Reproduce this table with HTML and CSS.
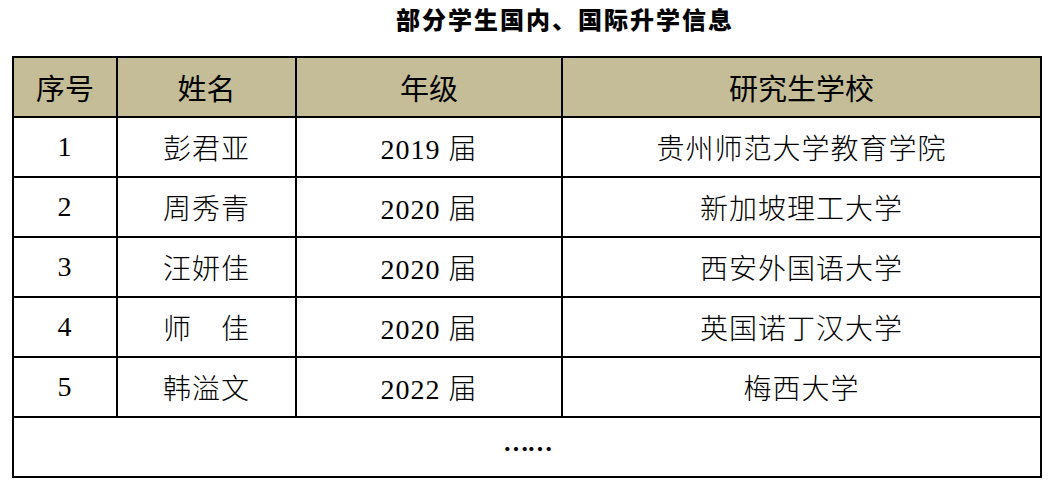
FILE: index.html
```html
<!DOCTYPE html>
<html lang="zh">
<head>
<meta charset="utf-8">
<title>部分学生国内、国际升学信息</title>
<link rel="stylesheet" href="styles.css">
</head>
<body>
<h1 class="title">部分学生国内、国际升学信息</h1>
<div class="grid">
  <div class="cell head">序号</div>
  <div class="cell head">姓名</div>
  <div class="cell head">年级</div>
  <div class="cell head">研究生学校</div>

  <div class="cell">1</div>
  <div class="cell">彭君亚</div>
  <div class="cell">2019 届</div>
  <div class="cell">贵州师范大学教育学院</div>

  <div class="cell">2</div>
  <div class="cell">周秀青</div>
  <div class="cell">2020 届</div>
  <div class="cell">新加坡理工大学</div>

  <div class="cell">3</div>
  <div class="cell">汪妍佳</div>
  <div class="cell">2020 届</div>
  <div class="cell">西安外国语大学</div>

  <div class="cell">4</div>
  <div class="cell">师　佳</div>
  <div class="cell">2020 届</div>
  <div class="cell">英国诺丁汉大学</div>

  <div class="cell">5</div>
  <div class="cell">韩溢文</div>
  <div class="cell">2022 届</div>
  <div class="cell">梅西大学</div>

  <div class="cell more">……</div>
</div>
</body>
</html>
```

FILE: styles.css
```css
html, body {
  margin: 0;
  padding: 0;
  background: #ffffff;
}

body {
  width: 1048px;
  height: 484px;
  overflow: hidden;
  color: #000000;
  font-family: "Liberation Serif", "Noto Sans CJK SC", serif;
}

.title {
  margin: 0;
  height: 56px;
  padding: 4px 0 0 82px;
  box-sizing: border-box;
  text-align: center;
  font-family: "Noto Sans CJK SC", sans-serif;
  font-weight: 900;
  font-size: 24px;
  letter-spacing: 2px;
  line-height: 30px;
}

.grid {
  margin-left: 12px;
  width: 1030px;
  box-sizing: border-box;
  display: grid;
  grid-template-columns: 102px 177px 264px 477px;
  grid-auto-rows: 58px;
  gap: 2px;
  padding: 2px;
  background: #000000;
}

.cell {
  background: #ffffff;
  display: flex;
  align-items: center;
  justify-content: center;
  font-size: 28px;
  font-weight: 300;
  letter-spacing: 1px;
  white-space: nowrap;
}

.head {
  background: #c4bd97;
  font-family: "Noto Sans CJK SC", sans-serif;
  font-weight: 400;
  font-size: 29px;
  letter-spacing: 0;
}

.more {
  grid-column: 1 / -1;
  font-family: "Noto Sans CJK SC", sans-serif;
  font-weight: 700;
  font-size: 26px;
  letter-spacing: -2px;
}
```
